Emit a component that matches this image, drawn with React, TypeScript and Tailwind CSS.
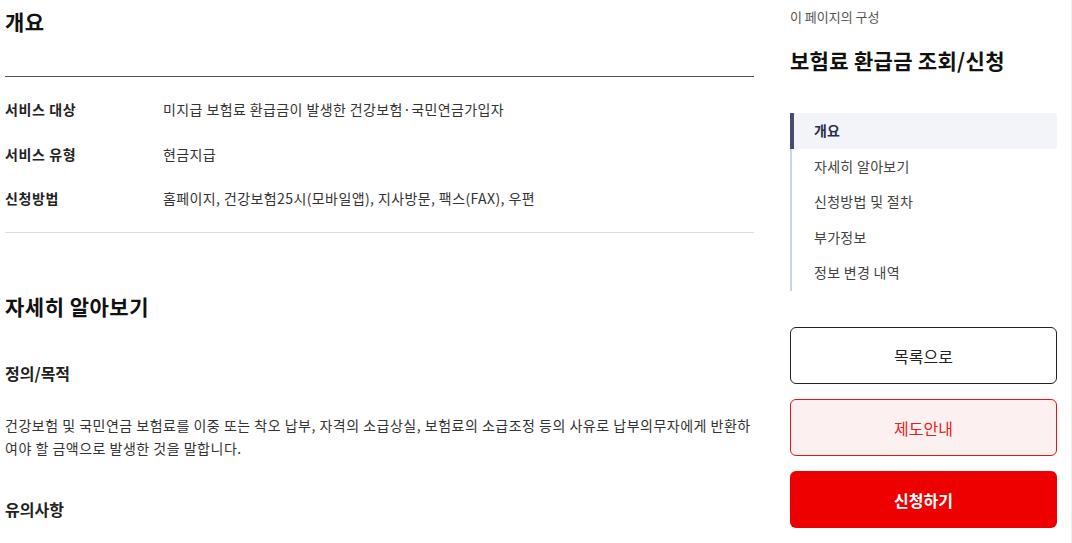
import React from "react";

const font = { fontFamily: '"Noto Sans CJK KR", "Noto Sans", sans-serif' };

export default function App() {
  const rows = [
    ["서비스 대상", "미지급 보험료 환급금이 발생한 건강보험·국민연금가입자"],
    ["서비스 유형", "현금지급"],
    ["신청방법", "홈페이지, 건강보험25시(모바일앱), 지사방문, 팩스(FAX), 우편"],
  ];
  const nav = ["개요", "자세히 알아보기", "신청방법 및 절차", "부가정보", "정보 변경 내역"];
  return (
    <div style={font} className="w-[1072px] h-[543px] overflow-hidden bg-white flex text-[#222]">
      <main className="w-[749px] ml-[5px] shrink-0">
        <h2 className="mt-[6px] text-[21px] leading-[30px] tracking-[0.5px] font-bold text-[#111]">개요</h2>
        <div className="mt-[40px] border-t border-[#555] border-b border-b-[#ddd] pt-[21px] pb-[23px] flex flex-col gap-[22.5px]">
          {rows.map(([k, v]) => (
            <div key={k} className="flex text-[14px] leading-[22px]">
              <div className="w-[158px] font-bold tracking-[0.6px] text-[#222]">{k}</div>
              <div className="tracking-[0.4px] text-[#333]">{v}</div>
            </div>
          ))}
        </div>
        <h2 className="mt-[58px] text-[21px] leading-[30px] tracking-[0.5px] font-bold text-[#111]">자세히 알아보기</h2>
        <h3 className="mt-[40px] text-[16px] leading-[24px] font-bold text-[#222]">정의/목적</h3>
        <p className="mt-[28.5px] text-[14px] leading-[23px] tracking-[0.5px] text-[#333]">
          건강보험 및 국민연금 보험료를 이중 또는 착오 납부, 자격의 소급상실, 보험료의 소급조정 등의 사유로 납부의무자에게 반환하여야 할 금액으로 발생한 것을 말합니다.
        </p>
        <h3 className="mt-[37.5px] text-[16px] leading-[24px] font-bold text-[#222]">유의사항</h3>
      </main>
      <aside className="w-[267px] ml-[36px] shrink-0">
        <div className="mt-[8px] text-[13px] leading-[18px] text-[#555]">이 페이지의 구성</div>
        <div className="mt-[19px] text-[21px] leading-[30px] tracking-[0.3px] font-bold text-[#111]">보험료 환급금 조회/신청</div>
        <ul className="mt-[38px] border-l-2 border-[#cdd5e2]">
          {nav.map((n, i) => (
            <li
              key={n}
              className={
                i === 0
                  ? "h-[35.5px] -ml-[2px] pl-[20px] border-l-4 border-[#4a4c6b] bg-[#f3f4fa] rounded-r-[3px] flex items-center text-[14px] font-bold text-[#2b2e4a]"
                  : "h-[35.5px] pl-[22px] flex items-center text-[14px] tracking-[0.3px] text-[#444]"
              }
            >
              {n}
            </li>
          ))}
        </ul>
        <div className="mt-[36.5px] flex flex-col gap-[15px]">
          <button className="h-[57px] rounded-[6px] border border-[#222] bg-white text-[16px] text-[#222]">목록으로</button>
          <button className="h-[57px] rounded-[6px] border border-[#ee1111] bg-[#fdf0f0] text-[16px] text-[#e52222]">제도안내</button>
          <button className="h-[57px] rounded-[6px] bg-[#ee0000] text-[16px] font-bold text-white">신청하기</button>
        </div>
      </aside>
      <div className="flex-1 border-r border-[#eeeeee]" />
    </div>
  );
}
